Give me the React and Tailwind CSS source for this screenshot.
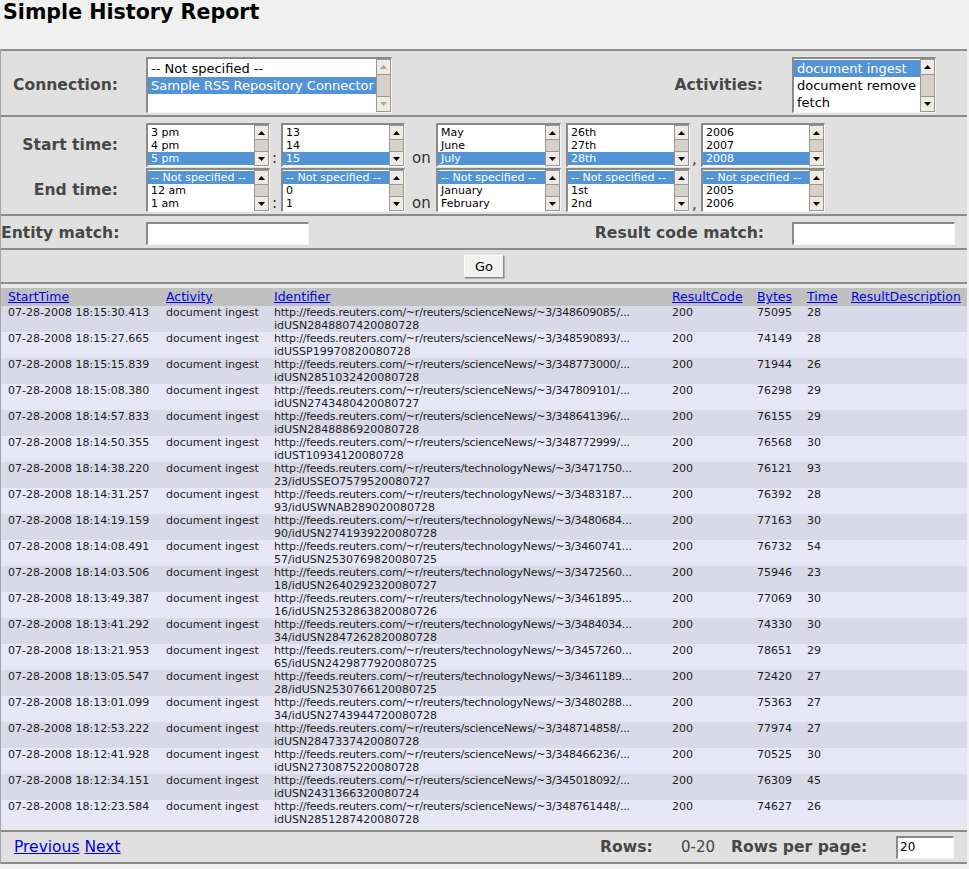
import React from "react";

const rows = [
  ["07-28-2008 18:15:30.413", "http://feeds.reuters.com/~r/reuters/scienceNews/~3/348609085/...", "idUSN2848807420080728", "75095", "28"],
  ["07-28-2008 18:15:27.665", "http://feeds.reuters.com/~r/reuters/scienceNews/~3/348590893/...", "idUSSP19970820080728", "74149", "28"],
  ["07-28-2008 18:15:15.839", "http://feeds.reuters.com/~r/reuters/scienceNews/~3/348773000/...", "idUSN2851032420080728", "71944", "26"],
  ["07-28-2008 18:15:08.380", "http://feeds.reuters.com/~r/reuters/scienceNews/~3/347809101/...", "idUSN2743480420080727", "76298", "29"],
  ["07-28-2008 18:14:57.833", "http://feeds.reuters.com/~r/reuters/scienceNews/~3/348641396/...", "idUSN2848886920080728", "76155", "29"],
  ["07-28-2008 18:14:50.355", "http://feeds.reuters.com/~r/reuters/scienceNews/~3/348772999/...", "idUST10934120080728", "76568", "30"],
  ["07-28-2008 18:14:38.220", "http://feeds.reuters.com/~r/reuters/technologyNews/~3/3471750...", "23/idUSSEO7579520080727", "76121", "93"],
  ["07-28-2008 18:14:31.257", "http://feeds.reuters.com/~r/reuters/technologyNews/~3/3483187...", "93/idUSWNAB289020080728", "76392", "28"],
  ["07-28-2008 18:14:19.159", "http://feeds.reuters.com/~r/reuters/technologyNews/~3/3480684...", "90/idUSN2741939220080728", "77163", "30"],
  ["07-28-2008 18:14:08.491", "http://feeds.reuters.com/~r/reuters/technologyNews/~3/3460741...", "57/idUSN2530769820080725", "76732", "54"],
  ["07-28-2008 18:14:03.506", "http://feeds.reuters.com/~r/reuters/technologyNews/~3/3472560...", "18/idUSN2640292320080727", "75946", "23"],
  ["07-28-2008 18:13:49.387", "http://feeds.reuters.com/~r/reuters/technologyNews/~3/3461895...", "16/idUSN2532863820080726", "77069", "30"],
  ["07-28-2008 18:13:41.292", "http://feeds.reuters.com/~r/reuters/technologyNews/~3/3484034...", "34/idUSN2847262820080728", "74330", "30"],
  ["07-28-2008 18:13:21.953", "http://feeds.reuters.com/~r/reuters/technologyNews/~3/3457260...", "65/idUSN2429877920080725", "78651", "29"],
  ["07-28-2008 18:13:05.547", "http://feeds.reuters.com/~r/reuters/technologyNews/~3/3461189...", "28/idUSN2530766120080725", "72420", "27"],
  ["07-28-2008 18:13:01.099", "http://feeds.reuters.com/~r/reuters/technologyNews/~3/3480288...", "34/idUSN2743944720080728", "75363", "27"],
  ["07-28-2008 18:12:53.222", "http://feeds.reuters.com/~r/reuters/scienceNews/~3/348714858/...", "idUSN2847337420080728", "77974", "27"],
  ["07-28-2008 18:12:41.928", "http://feeds.reuters.com/~r/reuters/scienceNews/~3/348466236/...", "idUSN2730875220080728", "70525", "30"],
  ["07-28-2008 18:12:34.151", "http://feeds.reuters.com/~r/reuters/scienceNews/~3/345018092/...", "idUSN2431366320080724", "76309", "45"],
  ["07-28-2008 18:12:23.584", "http://feeds.reuters.com/~r/reuters/scienceNews/~3/348761448/...", "idUSN2851287420080728", "74627", "26"],
];

function Arrow({ dir, disabled }) {
  return (
    <svg width="7" height="4" viewBox="0 0 7 4">
      <path d={dir === "up" ? "M0 4L3.5 0L7 4Z" : "M0 0L3.5 4L7 0Z"} fill={disabled ? "#a8a5a0" : "#000"} />
    </svg>
  );
}

function Scrollbar({ small, disabled }) {
  const btn = small ? "h-[14px]" : "h-[15px]";
  return (
    <div className="flex flex-col w-[15px] shrink-0 bg-[#d6d2cb] border border-[#9a9791]">
      <div className={`flex items-center justify-center bg-[#eeebe6] border-b border-[#9a9791] ${btn}`}>
        <Arrow dir="up" disabled={disabled} />
      </div>
      <div className="flex-1" />
      <div className={`flex items-center justify-center bg-[#eeebe6] border-t border-[#9a9791] ${btn}`}>
        <Arrow dir="down" disabled={disabled} />
      </div>
    </div>
  );
}

function ListBox({ width, small, options, sel, disabled }) {
  const rowCls = small ? "h-[13px] leading-[13px] text-[11px]" : "h-[17px] leading-[17px] text-[13px]";
  const hCls = small ? "h-[44px]" : "h-[56px]";
  return (
    <div
      className={`flex shrink-0 bg-white border-t-2 border-l-2 border-r border-b border-t-[#8a8a8a] border-l-[#8a8a8a] border-r-[#f6f6f6] border-b-[#f6f6f6] ${width} ${hCls}`}
    >
      <div className="flex-1 min-w-0 overflow-hidden pt-[1px]">
        {options.map((o, i) => (
          <div
            key={i}
            className={`whitespace-nowrap pl-[3px] ${rowCls} ${i === sel ? "bg-[#5294d6] text-white" : "text-black"}`}
          >
            {o}
          </div>
        ))}
      </div>
      <Scrollbar small={small} disabled={disabled} />
    </div>
  );
}

function TextInput({ width, value }) {
  return (
    <div
      className={`h-[23px] bg-white border-t-2 border-l-2 border-r border-b border-t-[#8a8a8a] border-l-[#8a8a8a] border-r-[#f6f6f6] border-b-[#f6f6f6] text-[12px] leading-[19px] pl-[2px] text-black ${width}`}
    >
      {value}
    </div>
  );
}

const Line = () => <div className="h-[2px] bg-[#8c8c8c]" />;

const Label = ({ children, className = "" }) => (
  <span className={`text-[15.6px] font-bold text-[#474747] whitespace-nowrap ${className}`}>{children}</span>
);

function TimeRow({ label, opts }) {
  return (
    <div className="flex items-center">
      <div className="w-[117px] text-right">
        <Label>{label}</Label>
      </div>
      <div className="ml-[28px] flex items-end">
        <ListBox width="w-[124px]" small options={opts[0]} sel={opts[0].sel} />
        <span className="w-[11px] text-[15px] leading-[15px] text-[#333] pl-[2px] pb-[1px]">:</span>
        <ListBox width="w-[124px]" small options={opts[1]} sel={opts[1].sel} />
        <span className="w-[31px] text-[15px] leading-[15px] text-[#333] pl-[7px] pb-[1px]">on</span>
        <ListBox width="w-[125px]" small options={opts[2]} sel={opts[2].sel} />
        <span className="w-[5px]" />
        <ListBox width="w-[124px]" small options={opts[3]} sel={opts[3].sel} />
        <span className="w-[11px] text-[15px] leading-[15px] text-[#333] pl-[2px] pb-[0px]">,</span>
        <ListBox width="w-[124px]" small options={opts[4]} sel={opts[4].sel} />
      </div>
    </div>
  );
}

function withSel(arr, sel) {
  const a = [...arr];
  a.sel = sel;
  return a;
}

const NS = "-- Not specified --";

export default function App() {
  const startOpts = [
    withSel(["3 pm", "4 pm", "5 pm"], 2),
    withSel(["13", "14", "15"], 2),
    withSel(["May", "June", "July"], 2),
    withSel(["26th", "27th", "28th"], 2),
    withSel(["2006", "2007", "2008"], 2),
  ];
  const endOpts = [
    withSel([NS, "12 am", "1 am"], 0),
    withSel([NS, "0", "1"], 0),
    withSel([NS, "January", "February"], 0),
    withSel([NS, "1st", "2nd"], 0),
    withSel([NS, "2005", "2006"], 0),
  ];
  const link = "text-[#0000ee] underline";
  return (
    <div className="min-h-[869px] bg-[#f0f0f0] font-['DejaVu_Sans',sans-serif] text-black">
      <div className="h-[49px] pl-[3px] pt-[1px]">
        <h1 className="text-[20.6px] font-bold leading-[23px] text-black">Simple History Report</h1>
      </div>
      <div className="w-[967px] border-l border-[#a4a4a4] bg-[#e0e0e0]">
        <Line />
        {/* Connection / Activities */}
        <div className="h-[64px] pt-[6px] pb-[2px] flex items-center">
          <div className="w-[117px] text-right pt-[1px]">
            <Label>Connection:</Label>
          </div>
          <div className="ml-[28px]">
            <ListBox width="w-[246px]" options={[NS, "Sample RSS Repository Connector"]} sel={1} disabled />
          </div>
          <div className="flex-1" />
          <Label className="pt-[1px]">Activities:</Label>
          <div className="ml-[29px] mr-[31px]">
            <ListBox width="w-[144px]" options={["document ingest", "document remove", "fetch"]} sel={0} />
          </div>
        </div>
        <Line />
        {/* Times */}
        <div className="h-[97px] pt-[6px] pb-[2px] flex flex-col gap-[1px]">
          <TimeRow label="Start time:" opts={startOpts} />
          <TimeRow label="End time:" opts={endOpts} />
        </div>
        <Line />
        {/* Entity / result code */}
        <div className="h-[32px] pt-[6px] pb-[3px] flex items-center">
          <div className="w-[117px] text-right">
            <Label>Entity match:</Label>
          </div>
          <div className="ml-[28px]">
            <TextInput width="w-[163px]" />
          </div>
          <div className="flex-1" />
          <Label>Result code match:</Label>
          <div className="ml-[28px] mr-[12px]">
            <TextInput width="w-[163px]" />
          </div>
        </div>
        <Line />
        {/* Go */}
        <div className="h-[32px] pt-[5px] pb-[4px] flex justify-center">
          <button className="w-[40px] h-[23px] bg-[#f2f2f0] border border-t-white border-l-white border-r-[#8a8a8a] border-b-[#8a8a8a] shadow-[1px_1px_0_#b0b0b0] text-[13px] leading-[20px] text-black">
            Go
          </button>
        </div>
        <Line />
        <div className="h-[4px] bg-[#e9e9e9]" />
        {/* Table */}
        <table className="table-fixed border-collapse w-[966px]">
          <colgroup>
            <col className="w-[158px]" />
            <col className="w-[108px]" />
            <col className="w-[398px]" />
            <col className="w-[85px]" />
            <col className="w-[50px]" />
            <col className="w-[44px]" />
            <col className="w-[123px]" />
          </colgroup>
          <thead>
            <tr className="bg-[#c0c0c0] h-[18px] text-left">
              {["StartTime", "Activity", "Identifier", "ResultCode", "Bytes", "Time", "ResultDescription"].map((h) => (
                <th key={h} className="p-0 pl-[7px] font-normal text-[12.5px] leading-[18px] whitespace-nowrap">
                  <a className={link}>{h}</a>
                </th>
              ))}
            </tr>
          </thead>
          <tbody>
            {rows.map((r, i) => (
              <tr key={i} className={`h-[26px] align-top text-[11px] leading-[13px] text-[#1c1c1c] ${i % 2 === 0 ? "bg-[#d9d9e8]" : "bg-[#e7e7f7]"}`}>
                <td className="p-0 pl-[7px] whitespace-nowrap">{r[0]}</td>
                <td className="p-0 pl-[7px] whitespace-nowrap">document ingest</td>
                <td className="p-0 pl-[7px] whitespace-nowrap overflow-hidden">
                  <span className="tracking-[-0.22px]">{r[1]}</span>
                  <br />
                  {r[2]}
                </td>
                <td className="p-0 pl-[7px]">200</td>
                <td className="p-0 pl-[7px]">{r[3]}</td>
                <td className="p-0 pl-[7px]">{r[4]}</td>
                <td className="p-0 pl-[7px]"></td>
              </tr>
            ))}
          </tbody>
        </table>
        <div className="h-[4px] bg-[#e9e9e9]" />
        <Line />
        {/* Footer */}
        <div className="h-[30px] pt-[4px] pb-[3px] flex items-center">
          <div className="w-[599px] pl-[13px] text-[15.5px]">
            <a className={link}>Previous</a> <a className={link}>Next</a>
          </div>
          <div className="w-[81px]">
            <Label>Rows:</Label>
          </div>
          <div className="w-[50px] text-[15px] text-[#474747]">0-20</div>
          <div className="w-[165px]">
            <Label>Rows per page:</Label>
          </div>
          <TextInput width="w-[58px]" value="20" />
        </div>
        <Line />
      </div>
    </div>
  );
}
